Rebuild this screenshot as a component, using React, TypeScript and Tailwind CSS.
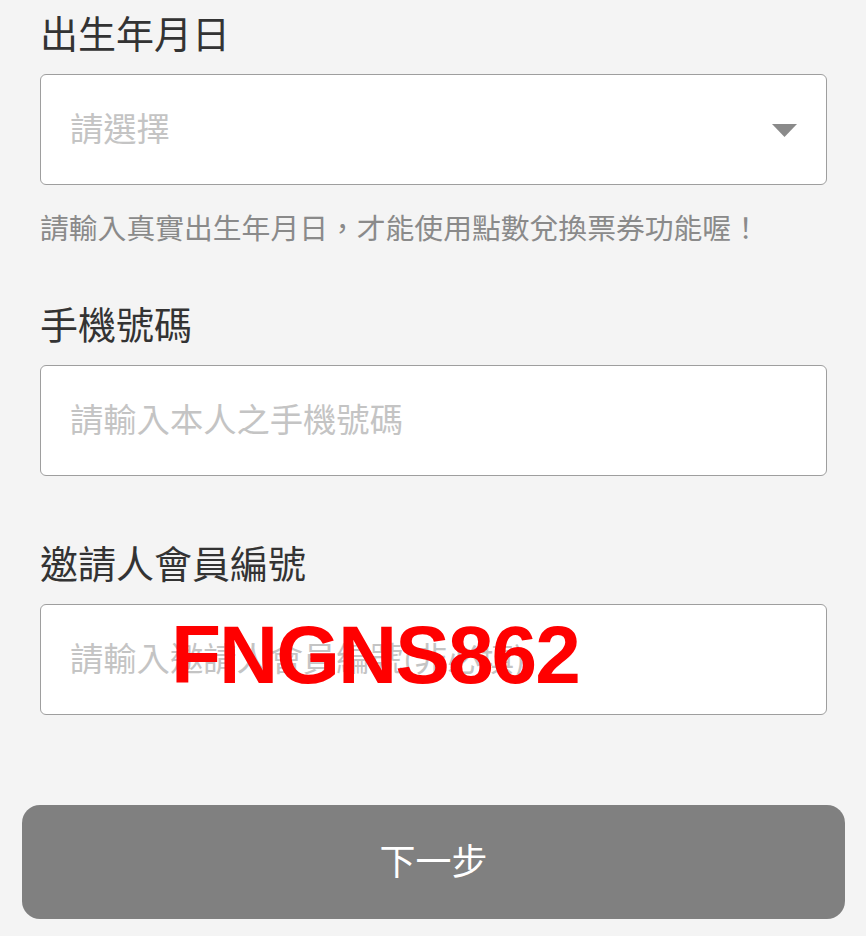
import React from "react";

const cjk = { fontFamily: '"Noto Sans CJK TC", "Noto Sans", sans-serif' };

function Label({ text, className = "" }: { text: string; className?: string }) {
  return (
    <div className={`h-[70px] pb-[6px] flex items-center text-[38px] leading-none text-[#333333] ${className}`}>
      {text}
    </div>
  );
}

function Field({ placeholder, select = false, children }: { placeholder: string; select?: boolean; children?: React.ReactNode }) {
  return (
    <div className="relative mt-[4px] h-[111px] rounded-[6px] border border-[#9e9e9e] bg-white flex items-center pl-[29px] pr-[29px]">
      <span className="flex-1 mb-[6px] text-[33.3px] leading-none text-[#c4c4c4]">{placeholder}</span>
      {select && (
        <svg width="25" height="13" viewBox="0 0 25 13" className="mt-[1px]">
          <polygon points="0,0 25,0 12.5,13" fill="#8a8a8a" />
        </svg>
      )}
      {children}
    </div>
  );
}

export default function App() {
  return (
    <div className="w-[866px] h-[936px] bg-[#f4f4f4] overflow-hidden" style={cjk}>
      <div className="pl-[40px] pr-[39px]">
        <Label text="出生年月日" />
        <Field placeholder="請選擇" select />
        <div className="h-[90px] pb-[6px] flex items-center text-[28.8px] leading-none text-[#8a8a8a]">
          請輸入真實出生年月日，才能使用點數兌換票券功能喔！
        </div>
        <Label text="手機號碼" className="mt-[16px]" />
        <Field placeholder="請輸入本人之手機號碼" />
        <Label text="邀請人會員編號" className="mt-[54px]" />
        <Field placeholder="請輸入邀請人會員編號(非必填)">
          <span
            className="absolute left-[130px] top-[9px] text-[82px] leading-none font-bold text-[#ff0000] tracking-[-2px]"
            style={{ fontFamily: '"Liberation Sans", Arial, sans-serif' }}
          >
            FNGNS862
          </span>
        </Field>
      </div>
      <div className="pl-[22px] pr-[21px] mt-[90px]">
        <div className="h-[114px] pb-[6px] rounded-[18px] bg-[#808080] flex items-center justify-center text-[36px] leading-none text-white">
          下一步
        </div>
      </div>
    </div>
  );
}
